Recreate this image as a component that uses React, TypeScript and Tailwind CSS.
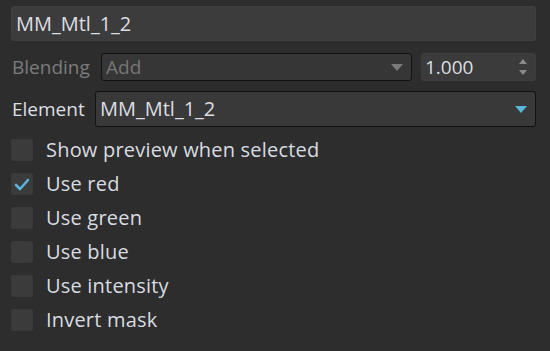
import React from "react";

const font = { fontFamily: '"Open Sans", "Noto Sans", sans-serif' };

function Caret({ color }: { color: string }) {
  return (
    <svg width="12" height="7" viewBox="0 0 12 7">
      <path d="M0 0h12L6 7z" fill={color} />
    </svg>
  );
}

function Check({ checked, label }: { checked?: boolean; label: string }) {
  return (
    <div className="flex h-[34px] items-center">
      <div className="flex h-[22px] w-[22px] items-center justify-center rounded-[2px] border border-[#3a3a3a] bg-[#3b3b3b]">
        {checked && (
          <svg width="16" height="13" viewBox="0 0 16 13">
            <path
              d="M2 7l4 4 8-9"
              fill="none"
              stroke="#5ab4dc"
              strokeWidth="2.6"
              strokeLinecap="round"
              strokeLinejoin="round"
            />
          </svg>
        )}
      </div>
      <span className="ml-[13px] text-[20px] tracking-[0.2px] text-[#d8dce0]">{label}</span>
    </div>
  );
}

export default function App() {
  return (
    <div
      className="flex h-[351px] w-[550px] flex-col bg-[#2d2d2d] pl-[11px] pr-[14px] pt-[6px]"
      style={font}
    >
      <div className="flex h-[35px] items-center rounded-[3px] border border-[#404040] bg-[#3c3c3c] px-[4px] text-[20px] text-[#dcdfe2]">
        MM_Mtl_1_2
      </div>

      <div className="mt-[12px] flex h-[28px] items-center">
        <span className="w-[90px] pl-[1px] text-[19px] text-[#7c7c7c]">Blending</span>
        <div className="flex h-full flex-1 items-center justify-between rounded-[3px] border border-[#111] bg-[#363636] pl-[4px] pr-[8px] text-[19px] text-[#777]">
          <span>Add</span>
          <Caret color="#7a7a7a" />
        </div>
        <div className="ml-[9px] flex h-full w-[115px] items-center justify-between rounded-[3px] border border-[#3e3e3e] bg-[#3b3b3b] pl-[3px] pr-[8px] text-[19px] text-[#dcdfe2]">
          <span>1.000</span>
          <div className="flex flex-col gap-[6px]">
            <svg width="8" height="5" viewBox="0 0 8 5">
              <path d="M0 5h8L4 0z" fill="#8a8a8a" />
            </svg>
            <svg width="8" height="5" viewBox="0 0 8 5">
              <path d="M0 0h8L4 5z" fill="#8a8a8a" />
            </svg>
          </div>
        </div>
      </div>

      <div className="mt-[10px] flex h-[36px] items-center">
        <span className="w-[84px] pl-[1px] text-[19px] text-[#dcdfe2]">Element</span>
        <div className="flex h-full flex-1 items-center justify-between rounded-[3px] border border-[#111] bg-[#393939] pl-[4px] pr-[8px] text-[20px] text-[#dcdfe2]">
          <span>MM_Mtl_1_2</span>
          <Caret color="#5ab4dc" />
        </div>
      </div>

      <div className="mt-[6px] flex flex-col">
        <Check label="Show preview when selected" />
        <Check checked label="Use red" />
        <Check label="Use green" />
        <Check label="Use blue" />
        <Check label="Use intensity" />
        <Check label="Invert mask" />
      </div>
    </div>
  );
}
